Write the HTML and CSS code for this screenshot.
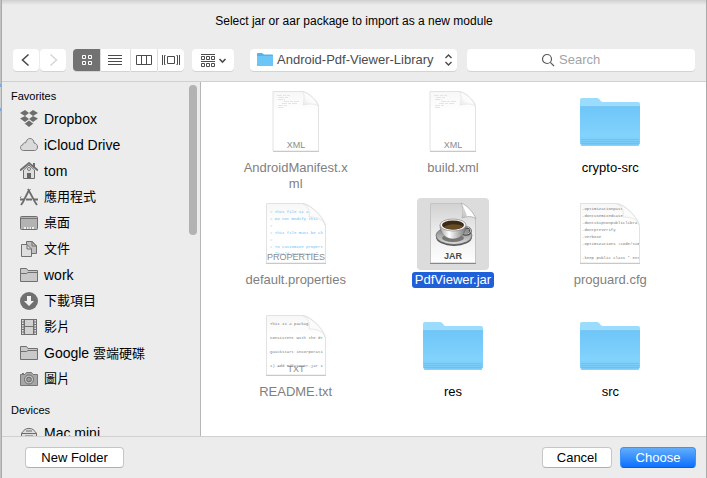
FILE: index.html
```html
<!DOCTYPE html>
<html lang="zh-Hant">
<head>
<meta charset="utf-8">
<title>Select package</title>
<link rel="stylesheet" href="styles.css">
</head>
<body>
<svg class="defs" aria-hidden="true">
  <defs>
    <linearGradient id="folder-front" x1="0" y1="0" x2="0" y2="1">
      <stop offset="0" stop-color="#6ec5f8"/><stop offset=".75" stop-color="#82d3fc"/><stop offset="1" stop-color="#78c9f6"/>
    </linearGradient>
    <linearGradient id="curl" x1="0" y1="1" x2="1" y2="0">
      <stop offset="0" stop-color="#e6e6e6"/><stop offset=".4" stop-color="#fbfbfb"/><stop offset="1" stop-color="#ffffff"/>
    </linearGradient>
    <linearGradient id="page" x1="0" y1="0" x2="0" y2="1">
      <stop offset="0" stop-color="#f7f7f7"/><stop offset=".35" stop-color="#ffffff"/>
    </linearGradient>
    <linearGradient id="jar-page" x1="0" y1="0" x2="0" y2="1">
      <stop offset="0" stop-color="#d2d2d2"/><stop offset=".5" stop-color="#ededed"/><stop offset="1" stop-color="#ffffff"/>
    </linearGradient>
    <linearGradient id="cup" x1="0" y1="0" x2="1" y2="0">
      <stop offset="0" stop-color="#a2a2a2"/><stop offset=".35" stop-color="#ffffff"/><stop offset="1" stop-color="#777777"/>
    </linearGradient>
    <linearGradient id="saucer" x1="0" y1="0" x2="0" y2="1">
      <stop offset="0" stop-color="#777777"/><stop offset="1" stop-color="#dddddd"/>
    </linearGradient>
    <clipPath id="wide-clip"><path d="M0 0H38Q43 2 43 13Q55 14 58 21V60H0z"/></clipPath>
    <symbol id="folder" viewBox="0 0 72 72">
      <path d="M7 59.500H65" stroke="#8f9ba2" stroke-opacity=".6"/>
      <path d="M6 27V14Q6 12 8 12H23C26 12 26 16 29 16H64Q66 16 66 18V28z" fill="#9adcfd"/>
      <path d="M6 20H66V57Q66 59 64 59H8Q6 59 6 57z" fill="url(#folder-front)"/>
      <path d="M6 20.500H66" stroke="#7cc6ee" stroke-opacity=".7"/>
      <path d="M7 53.500H65M7 55.500H65M7 57.500H65" stroke="#66b3e0" stroke-opacity=".6" stroke-width=".8"/>
    </symbol>
    <symbol id="doc-narrow" viewBox="0 0 72 72">
      <path d="M13 5.500H43C50 7 58 16 58.500 20V65H13z" fill="url(#page)" stroke="#e2e2e2"/>
      <path d="M13 65.500H59" stroke="#c8c8c8"/>
      <path d="M43 6C45 10 44 15 43 19C47 18 55 17 58 20C57 15 49 7 43 6z" fill="url(#curl)" stroke="#e2e2e2" stroke-width=".7"/>
      <path d="M17 9.500H30M19 11.500H28M18 13.500H25M24 15.500H40M22 17.500H38M18 19.500H27M18 21.500H23" stroke="#dedede" stroke-width=".8" stroke-dasharray="5 1 3 1"/>
    </symbol>
    <symbol id="doc-wide" viewBox="0 0 72 72">
      <path d="M6.500 5.500H43C51 6 65 21 65.500 28V65H6.500z" fill="url(#page)" stroke="#e2e2e2"/>
      <path d="M6 65.500H66" stroke="#c8c8c8"/>
    </symbol>
    <symbol id="wide-curl" viewBox="0 0 72 72">
      <path d="M43 6C49 8 50 14 49 19C57 19 63 21 65 27C63 19 51 7 43 6z" fill="url(#curl)" stroke="#e0e0e0" stroke-width=".7"/>
    </symbol>
    <symbol id="side-folder" viewBox="0 0 18 18">
      <path d="M.5 15.500V2.500H6.500L8 4.500H17.500V15.500z" fill="#c9c9c9" stroke="#707070"/><path d="M1 7.500H6.500L8 6.500H17" fill="none" stroke="#707070"/>
    </symbol>
  </defs>
</svg>
<main class="dialog">
  <header class="top">
    <h1 class="title">Select jar or aar package to import as a new module</h1>
    <div class="toolbar">
      <div class="nav">
        <button class="tool" aria-label="Back"><svg width="26" height="22" fill="none" stroke="#4c4c4c" stroke-width="1.600"><path d="M15.500 5.500L9.500 11L15.500 16.500"/></svg></button>
        <button class="tool" aria-label="Forward"><svg width="26" height="22" fill="none" stroke="#d8d8d8" stroke-width="1.600"><path d="M10.500 5.500L16.500 11L10.500 16.500"/></svg></button>
      </div>
      <div class="segments">
        <button class="tool on" aria-label="Icons"><svg width="27" height="22" fill="none" stroke="#fff"><path d="M9.500 6.500h3v3h-3zM15.500 6.500h3v3h-3zM9.500 12.500h3v3h-3zM15.500 12.500h3v3h-3z"/></svg></button>
        <button class="tool" aria-label="List"><svg width="29" height="22" stroke="#4c4c4c"><path d="M7 6.500H21M7 9.500H21M7 12.500H21M7 15.500H21"/></svg></button>
        <button class="tool" aria-label="Columns"><svg width="26" height="22" fill="none" stroke="#4c4c4c"><path d="M5.500 6.500h15v9h-15zM10.500 6.500v9M15.500 6.500v9"/></svg></button>
        <button class="tool" aria-label="Cover Flow"><svg width="26" height="22" fill="none" stroke="#4c4c4c"><path d="M9.500 7.500h7v7h-7zM4.500 6v10M21.500 6v10"/><path d="M6.500 6.500v9h1M6.500 6.500h1M19.500 6.500v9h-1M19.500 6.500h-1"/></svg></button>
      </div>
      <button class="tool group" aria-label="Arrange"><svg width="42" height="22" fill="none" stroke="#4c4c4c"><path d="M9 5.500H23M9.500 7.500h3v3h-3zM14.500 7.500h3v3h-3zM19.500 7.500h3v3h-3zM9 12.500H23M9.500 14.500h3v3h-3zM14.500 14.500h3v3h-3zM19.500 14.500h3v3h-3z"/><path d="M27.500 10L30.500 13L33.500 10" stroke-width="1.600"/></svg></button>
      <button class="tool path">
        <svg width="16" height="16" viewBox="0 0 16 16"><path d="M0 2Q0 1 1 1H5L7 2.500H15Q16 2.500 16 3.500V14H0z" fill="#56b1e4"/><path d="M0 4H16V14H0z" fill="#6bc6f7"/></svg>
        <span class="path-name">Android-Pdf-Viewer-Library</span>
        <svg width="9" height="16" fill="none" stroke="#4c4c4c" stroke-width="1.400"><path d="M1.500 6L4.500 3L7.500 6M1.500 10L4.500 13L7.500 10"/></svg>
      </button>
      <label class="search">
        <svg width="14" height="14" fill="none" stroke="#5a5a5a" stroke-width="1.200"><circle cx="6" cy="6" r="4.500"/><path d="M9.300 9.300L13 13"/></svg>
        <input type="text" placeholder="Search" aria-label="Search">
      </label>
    </div>
  </header>
  <div class="middle">
    <nav class="sidebar">
      <h2 class="heading">Favorites</h2>
      <ul class="places">
        <li><a href="#"><svg viewBox="0 0 18 18"><path d="M5 0L9 3L5 6L0 3zM13 0L18 3L13 6L9 3zM0 8.500L5 6L9 9L5 12zM18 8.500L13 6L9 9L13 12zM4 13L5 13.500L9 10.500L13 13.500L14 13L9 17z" fill="#6d6d6d"/></svg>Dropbox</a></li>
        <li><a href="#"><svg viewBox="0 0 18 18"><path d="M3.500 14.500C1.500 14.500.5 13 .5 11.500C.5 10 1.500 9 3 8.700C3 7 4.500 6.300 5.700 6.800C6.300 4.500 7.800 2.500 9.700 2.500C12.300 2.500 14 4.300 14 7C16 7 17.500 9 17.500 11C17.500 13.200 16 14.500 14.500 14.500z" fill="#dadada" stroke="#7a7a7a"/></svg>iCloud Drive</a></li>
        <li><a href="#"><svg viewBox="0 0 18 18"><path d="M3.500 8V16.500H14.500V8L9 3z" fill="#dedede" stroke="#6d6d6d"/><path d="M0 8.500L9 1L18 8.500" fill="none" stroke="#6d6d6d" stroke-width="1.800"/><path d="M13 1H15V6L13 4z" fill="#6d6d6d"/><path d="M7 11H11V16H7z" fill="#666"/><circle cx="9" cy="7" r="1.500" fill="#eee" stroke="#777"/></svg>tom</a></li>
        <li><a href="#"><svg viewBox="0 0 18 18" fill="none" stroke="#6d6d6d"><path d="M9 2L3 14L1 17M8 1L15 14L17 17" stroke-width="1.800"/><path d="M0 11.500H4M6 11.500H12M14 11.500H18" stroke-width="2.200"/><path d="M10.500 1L8 4M1 8.500L0 10"/></svg><span class="han">應用程式</span></a></li>
        <li><a href="#"><svg viewBox="0 0 18 18"><rect x=".5" y="2.500" width="17" height="13" rx="1" fill="#b3b3b3" stroke="#6d6d6d"/><path d="M1 4.500H17" stroke="#777"/><path d="M4 13H14V15H4z" fill="#eee"/><path d="M6.500 13V15M9 13V15M11.500 13V15" stroke="#999"/></svg><span class="han">桌面</span></a></li>
        <li><a href="#"><svg viewBox="0 0 18 18" stroke="#707070"><path d="M6.500 1.500H12L16.500 6V13.500H6.500z" fill="#c0c0c0"/><path d="M12 1.500V6H16.500M11.500 1L16.500 6" fill="none"/><path d="M1.500 4.500H7L11.500 9V16.500H1.500z" fill="#dedede"/><path d="M7 4.500V9H11.500" fill="none"/></svg><span class="han">文件</span></a></li>
        <li><a href="#"><svg><use href="#side-folder"/></svg>work</a></li>
        <li><a href="#"><svg viewBox="0 0 18 18"><circle cx="9" cy="9" r="9" fill="#707070"/><path d="M7 4H11V9H14L9 14L4 9H7z" fill="#f2f2f2"/></svg><span class="han">下載項目</span></a></li>
        <li><a href="#"><svg viewBox="0 0 18 18"><path d="M1 1H17V17H1z" fill="#707070"/><path d="M5 2H13V8H5zM5 9H13V16H5z" fill="#d2d2d2"/><path d="M2.800 2V17M15.200 2V17" stroke="#e4e4e4" stroke-width="1.600" stroke-dasharray="1.500 1"/></svg><span class="han">影片</span></a></li>
        <li><a href="#"><svg><use href="#side-folder"/></svg><span>Google <span class="han">雲端硬碟</span></span></a></li>
        <li><a href="#"><svg viewBox="0 0 18 18"><path d="M.5 4.500H5L6.500 2.500H11.500L13 4.500H17.500V15.500H.5z" fill="#a6a6a6" stroke="#777"/><path d="M2 3.500H4" stroke="#777"/><circle cx="9" cy="9.500" r="4.500" fill="#c6c6c6" stroke="#6d6d6d"/><circle cx="9" cy="9.500" r="2.400" fill="#999" stroke="#666"/></svg><span class="han">圖片</span></a></li>
      </ul>
      <h2 class="heading">Devices</h2>
      <ul class="places">
        <li><a href="#"><svg viewBox="0 0 18 18"><path d="M1.500 9.500Q2 8 5 5.500Q6 4.500 9 4.500T13 5.500Q16 8 16.500 9.500V15H1.500z" fill="#ddd" stroke="#6d6d6d"/><path d="M1.500 9.500H16.500M5 12H13M6 7H12" stroke="#6d6d6d"/></svg>Mac mini</a></li>
      </ul>
      <div class="thumb"></div>
    </nav>
    <section class="files" aria-label="Files">
      <figure class="file dim"><svg class="icon" viewBox="0 0 72 72"><use href="#doc-narrow"/><text class="kind" x="36" y="62">XML</text></svg><figcaption>AndroidManifest.xml</figcaption></figure>
      <figure class="file dim"><svg class="icon" viewBox="0 0 72 72"><use href="#doc-narrow"/><text class="kind" x="36" y="62">XML</text></svg><figcaption>build.xml</figcaption></figure>
      <figure class="file"><svg class="icon"><use href="#folder"/></svg><figcaption>crypto-src</figcaption></figure>
      <figure class="file dim"><svg class="icon" viewBox="0 0 72 72"><use href="#doc-wide"/><g class="code blue" transform="translate(7 6)" clip-path="url(#wide-clip)"><text x="3" y="9"># This file is a</text><text x="3" y="16"># Do not modify this</text><text x="3" y="23">#</text><text x="3" y="30"># This file must be ch</text><text x="3" y="37">#</text><text x="3" y="44"># To customize propert</text><text x="3" y="51"># "build.properties"</text></g><use href="#wide-curl"/><text class="kind" x="36" y="62">PROPERTIES</text></svg><figcaption>default.properties</figcaption></figure>
      <figure class="file selected"><svg class="icon" viewBox="0 0 72 72">
        <path d="M13.500 5.500H44C50 8 58 17 58.500 21V65H13.500z" fill="url(#jar-page)" stroke="#c4c4c4"/><path d="M13 65.500H59" stroke="#888"/>
        <path d="M44 5C47 10 46 15 45 20C50 18 56 18 59 21C57 15 50 7 44 5z" fill="#fff" stroke="#aaa" stroke-width=".8"/><path d="M45 20C47 15 47 11 46 8L50 18z" fill="#999" opacity=".5"/>
        <ellipse cx="37" cy="39" rx="18" ry="9" fill="#555"/><ellipse cx="37" cy="37.500" rx="18" ry="9" fill="url(#saucer)" stroke="#666" stroke-width=".7"/><ellipse cx="36" cy="40" rx="11" ry="4" fill="#777"/>
        <ellipse cx="49" cy="33" rx="4.500" ry="3.500" fill="none" stroke="#444" stroke-width="2.500"/><ellipse cx="49" cy="32.500" rx="4.500" ry="3.500" fill="none" stroke="#ccc"/>
        <path d="M23 27C23 36 29 41 36 41S49 36 49 27z" fill="url(#cup)" stroke="#666" stroke-width=".5"/><ellipse cx="36" cy="27" rx="13" ry="6" fill="#f6f6f6" stroke="#777" stroke-width=".6"/><ellipse cx="36" cy="27" rx="11" ry="4.500" fill="#3b2b16"/><path d="M27 29C32 25 41 26 46 28C42 33 31 32 27 29z" fill="#654c25"/>
        <text class="kind jar" x="36" y="61">JAR</text></svg><figcaption>PdfViewer.jar</figcaption></figure>
      <figure class="file dim"><svg class="icon" viewBox="0 0 72 72"><use href="#doc-wide"/><g class="code" transform="translate(7 6)" clip-path="url(#wide-clip)"><text x="1" y="6">-optimizationpass</text><text x="1" y="13">-dontusemixedcase</text><text x="1" y="20">-dontskipnonpubliclibra</text><text x="1" y="27">-dontpreverify</text><text x="1" y="34">-verbose</text><text x="1" y="41">-optimizations !code/sim</text><text x="1" y="55">-keep public class * ext</text></g><use href="#wide-curl"/></svg><figcaption>proguard.cfg</figcaption></figure>
      <figure class="file dim"><svg class="icon" viewBox="0 0 72 72"><use href="#doc-wide"/><g class="code" transform="translate(7 6)" clip-path="url(#wide-clip)"><text x="3" y="9">This is a packag</text><text x="3" y="23">Consistent with the dr</text><text x="3" y="37">Quickstart incorporati</text><text x="3" y="51">1) Add PdfViewer.jar i</text></g><use href="#wide-curl"/><text class="kind" x="36" y="62">TXT</text></svg><figcaption>README.txt</figcaption></figure>
      <figure class="file"><svg class="icon"><use href="#folder"/></svg><figcaption>res</figcaption></figure>
      <figure class="file"><svg class="icon"><use href="#folder"/></svg><figcaption>src</figcaption></figure>
    </section>
  </div>
  <footer class="actions">
    <button class="push new">New Folder</button>
    <button class="push">Cancel</button>
    <button class="push primary">Choose</button>
  </footer>
</main>
</body>
</html>
```
FILE: styles.css
```css
* { box-sizing: border-box; }
body {
  margin: 0;
  height: 100vh;
  padding: 0 1px 0 2px;
  background: linear-gradient(#c2c2c2 84px, #7fa9db 84px, #7fa9db 87px, #d0d0d0 87px, #d0d0d0 108px, #7fa9db 108px, #7fa9db 111px, #c2c2c2 111px);
  font-family: "Liberation Sans", "Noto Sans CJK TC", sans-serif;
  font-size: 13px;
  line-height: 16px;
  color: #000;
}
.defs { position: absolute; width: 0; height: 0; }
.dialog {
  height: 100%;
  display: flex;
  flex-direction: column;
  background: #ececec;
  box-shadow: 0 0 0 1px #aaa;
}
.top {
  height: 82px;
  flex: none;
  padding-top: 13px;
  border-bottom: 1px solid #d0d0d0;
  background: linear-gradient(#cfcfcf, #ececec 5px);
}
.title { margin: 0 0 20px; font-size: 12px; font-weight: 400; text-align: center; }
.toolbar { display: flex; padding: 0 11px; height: 22px; }
button { font: inherit; margin: 0; padding: 0; border: 0; }
.tool {
  display: flex;
  align-items: center;
  height: 22px;
  background: #fff;
  color: #4c4c4c;
  border-radius: 4px;
  box-shadow: 0 1px 0 #d3d3d3;
}
.nav { display: flex; gap: 1px; margin-right: 7px; }
.segments { display: flex; gap: 1px; margin-right: 8px; background: #ddd; border-radius: 4px; }
.segments .tool { border-radius: 0; }
.segments .tool:first-child { border-radius: 4px 0 0 4px; }
.segments .tool:last-child { border-radius: 0 4px 4px 0; }
.segments .on { background: #727272; }
.group { margin-right: 16px; }
.path { width: 207px; gap: 4px; padding: 0 4px 0 7px; margin-right: 10px; white-space: nowrap; }
.path-name { flex: 1; text-align: left; }
.search {
  flex: 1;
  display: flex;
  align-items: center;
  justify-content: center;
  gap: 4px;
  padding-right: 12px;
  background: #fff;
  border-radius: 4px;
  box-shadow: 0 1px 0 #d3d3d3;
}
.search input { width: 50px; padding: 0; border: 0; outline: 0; background: none; font: inherit; }
.search input::placeholder { color: #a3a3a3; opacity: 1; }
.middle { flex: 1; min-height: 0; display: flex; }
.sidebar {
  position: relative;
  width: 199px;
  flex: none;
  overflow: hidden;
  padding-top: 6px;
  border-right: 1px solid #b6b6b6;
}
.heading { margin: 0 0 2px; padding-left: 9px; font-size: 11px; font-weight: 400; }
.places { list-style: none; margin: 0 0 10px; padding: 0; }
.places a {
  display: flex;
  align-items: center;
  gap: 6px;
  height: 26px;
  padding-left: 18px;
  font-size: 14px;
  color: #000;
  text-decoration: none;
}
.places svg { width: 18px; height: 18px; flex: none; }
.han { font-size: 13px; }
.thumb {
  position: absolute;
  top: 3px;
  right: 3px;
  width: 8px;
  height: 150px;
  border-radius: 4px;
  background: #b3b3b3;
}
.files {
  flex: 1;
  display: grid;
  grid-template-columns: repeat(3, 1fr);
  grid-auto-rows: 112px;
  padding: 4px 17px 0 16px;
  overflow: hidden;
  background: #fff;
}
.file {
  margin: 0;
  display: flex;
  flex-direction: column;
  align-items: center;
  gap: 2px;
}
.icon { width: 72px; height: 72px; flex: none; }
.file figcaption { max-width: 114px; padding: 0 3px; text-align: center; word-break: break-all; }
.dim figcaption { color: #7f7f7f; }
.selected .icon { background: #dcdcdc; border-radius: 4px; }
.selected figcaption { background: #1f5fd8; color: #fff; border-radius: 3px; }
.kind { font-size: 9px; fill: #8c8c8c; text-anchor: middle; }
.jar { font-weight: 700; fill: #4a4a4a; }
.code { font-family: "Liberation Mono", monospace; font-size: 4px; fill: #777; }
.code.blue { fill: #6cbcf4; }
.actions {
  flex: none;
  display: flex;
  gap: 8px;
  height: 42px;
  padding: 10px 10px 0 23px;
  border-top: 1px solid #d0d0d0;
}
.push {
  height: 21px;
  min-width: 70px;
  background: #fff;
  border: 1px solid #c6c6c6;
  border-bottom-color: #b0b0b0;
  border-radius: 4px;
}
.new { min-width: 99px; margin-right: auto; }
.primary {
  min-width: 76px;
  color: #fff;
  background: linear-gradient(#62aefb, #0d70fe);
  border-color: #3f93f5;
  border-bottom-color: #0a5ce0;
}
```
